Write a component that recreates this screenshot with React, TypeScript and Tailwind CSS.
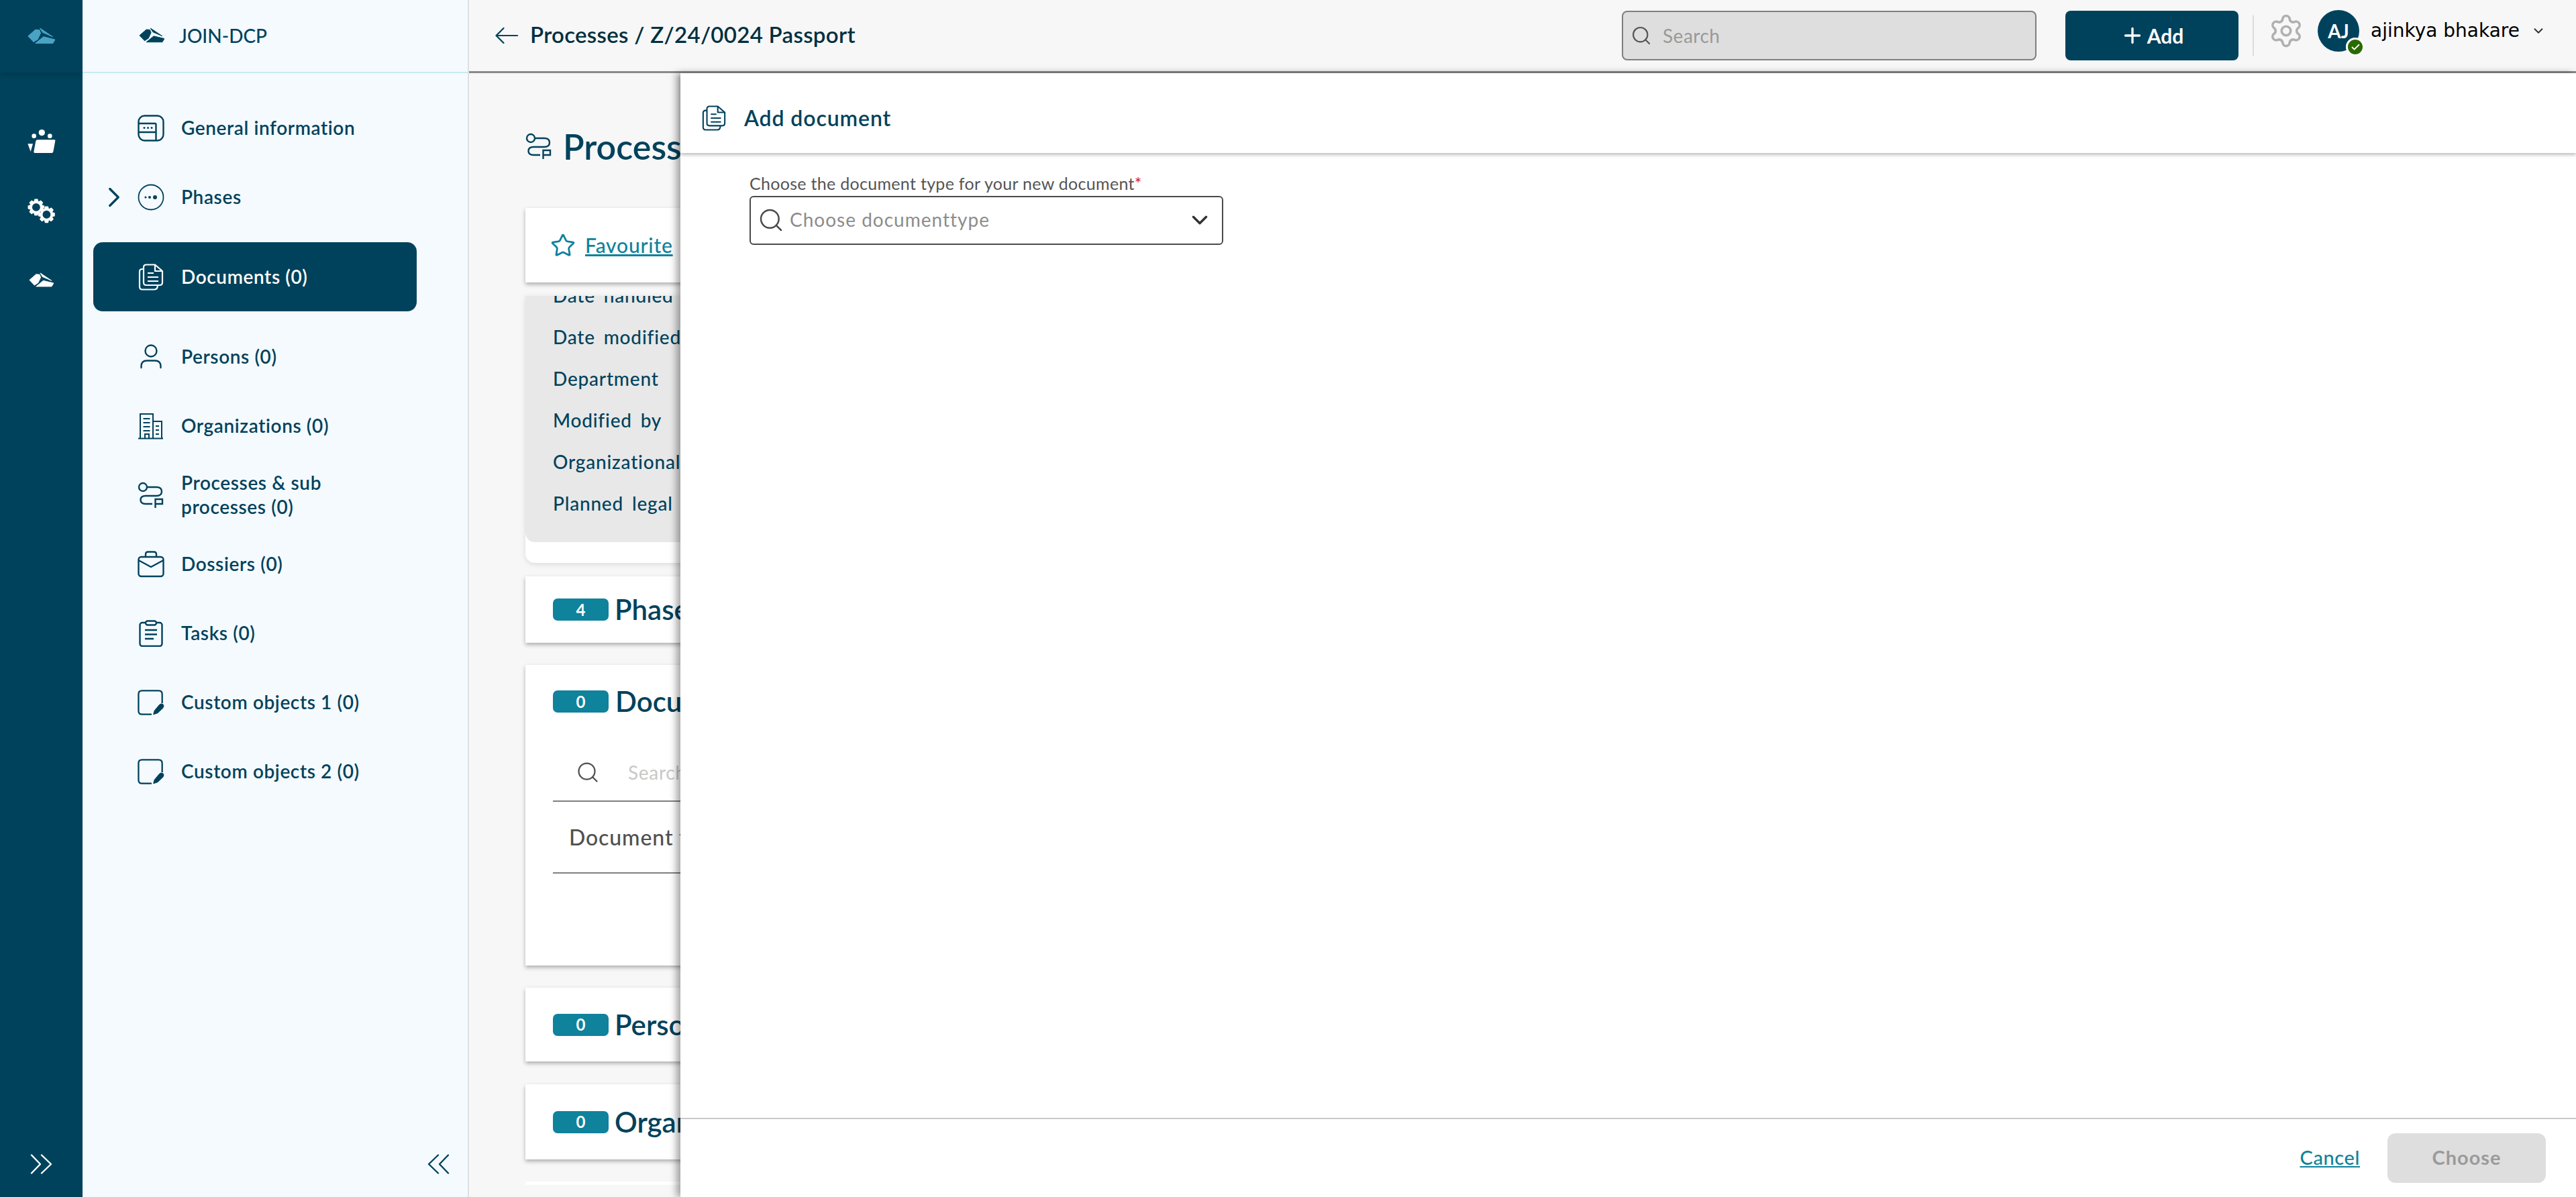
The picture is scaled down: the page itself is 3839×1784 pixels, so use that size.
import React from "react";
import { ChevronDown, ChevronRight, Plus, Search, Settings, Star, Check } from "lucide-react";

const NAVY = "text-[#00425c]";

// join logo, drawn in the 40x26 box it has in the rail
function JoinLogo({ className, fill }: { className?: string; fill: string }) {
  return (
    <svg viewBox="0 0 40 26" className={className} fill={fill} stroke={fill} strokeWidth="1" strokeLinejoin="round">
      <path d="M1 12.3 11.7 3 17.3 3.4 19 8 15 16.7 9 20.7Z" />
      <path d="M18.3 1 36.7 13.3 22 7Z" />
      <path d="M11.7 22.7 23.3 13.3 40 17.3 36.7 22.7Z" />
    </svg>
  );
}

function PeopleIcon() {
  return (
    <svg viewBox="25 30 135 120" className="w-[45px] h-[40px]" fill="white">
      <circle cx="60" cy="68" r="10" />
      <circle cx="95" cy="53" r="14" />
      <circle cx="131" cy="68" r="10" />
      <path d="M76 85H152Q156 85 155 90L146 138Q145 144 139 144H64Q58 144 59 138L68 91Q69 85 76 85Z" />
      <path d="M32 103H55L45 138Z" />
    </svg>
  );
}

function gearPath(cx: number, cy: number, outer: number, inner: number, teeth: number) {
  const pts: string[] = [];
  for (let i = 0; i < teeth; i++) {
    const a = (i / teeth) * Math.PI * 2;
    const w = Math.PI / teeth;
    [[inner, -w], [outer, -w * 0.5], [outer, w * 0.5], [inner, w]].forEach(([r, d]) => {
      pts.push(`${(cx + r * Math.cos(a + d)).toFixed(1)} ${(cy + r * Math.sin(a + d)).toFixed(1)}`);
    });
  }
  return "M" + pts.join("L") + "Z";
}

function GearsIcon() {
  return (
    <svg viewBox="28 338 130 122" className="w-[43px] h-[41px]">
      <path d={gearPath(70, 382, 38, 28, 8)} fill="white" />
      <circle cx="70" cy="382" r="18" fill="#00425c" />
      <circle cx="117" cy="415" r="32" fill="#00425c" />
      <path d={gearPath(117, 415, 38, 28, 8)} fill="white" />
      <circle cx="117" cy="415" r="18" fill="#00425c" />
    </svg>
  );
}

function DoubleChevron({ flip, className }: { flip?: boolean; className?: string }) {
  return (
    <svg viewBox="0 0 34 30" className={`w-[34px] h-[30px] ${flip ? "-scale-x-100" : ""} ${className ?? ""}`} fill="none" stroke="currentColor" strokeWidth="2.400" strokeLinecap="round" strokeLinejoin="round">
      <path d="M2 1.500 15 15 2 28.500M17 1.500 31 15 17 28.500" />
    </svg>
  );
}

function GeneralIcon() {
  return (
    <svg viewBox="0 0 40 40" className="w-[40px] h-[40px]" fill="none" stroke="currentColor" strokeWidth="2.400">
      <rect x="1.500" y="1.500" width="37" height="37" rx="9" />
      <path d="M1.500 13H26Q27.500 13 27.500 15V38M1.500 26H27.500" />
      <g fill="currentColor" stroke="none">
        <circle cx="10" cy="19.500" r="1.500" /><circle cx="15.500" cy="19.500" r="1.500" /><circle cx="21" cy="19.500" r="1.500" />
      </g>
    </svg>
  );
}

function PhasesIcon() {
  return (
    <svg viewBox="0 0 40 40" className="w-[40px] h-[40px]" fill="none" stroke="currentColor" strokeWidth="1.800">
      <circle cx="20" cy="20" r="18.500" />
      <g fill="currentColor" stroke="none">
        <circle cx="12" cy="20" r="1.600" /><circle cx="18" cy="20" r="2" /><circle cx="26" cy="20" r="3" />
      </g>
    </svg>
  );
}

function DocumentsIcon({ className = "w-[40px] h-[40px]" }: { className?: string }) {
  return (
    <svg viewBox="0 0 40 40" className={className} fill="none" stroke="currentColor" strokeWidth="2.200" strokeLinejoin="round">
      <path d="M13 1.500H26L37 11V28Q37 32 33 32H13Q9 32 9 28V5.500Q9 1.500 13 1.500Z" />
      <path d="M26 1.500V11H37" />
      <path d="M9 8H7Q3 8 3 12V34Q3 38.500 7 38.500H25Q30 38.500 30 32" />
      <path d="M15 14H24M15 20H31M15 26H31" />
    </svg>
  );
}

function PersonIcon() {
  return (
    <svg viewBox="0 0 40 40" className="w-[40px] h-[40px]" fill="none" stroke="currentColor" strokeWidth="2.400" strokeLinecap="round">
      <circle cx="20" cy="11" r="8.500" />
      <path d="M5.500 36V34Q5.500 25.500 14 25.500H26Q34.500 25.500 34.500 34V36" />
    </svg>
  );
}

function BuildingIcon() {
  return (
    <svg viewBox="0 0 40 40" className="w-[40px] h-[40px]" fill="none" stroke="currentColor" strokeWidth="2">
      <path d="M1 38.500H38M4 38V2H23V38M23 13H36V38" />
      <path d="M8.500 9H18.500M8.500 15H18.500M8.500 21H18.500M8.500 27H18.500M11 38V32H17V38M27 20H32M27 26H32M27 32H32" />
    </svg>
  );
}

function ProcessIcon({ className = "w-[40px] h-[40px]" }: { className?: string }) {
  return (
    <svg viewBox="0 0 40 40" className={className} fill="none" stroke="currentColor" strokeWidth="2.400">
      <circle cx="8" cy="8" r="6" />
      <path d="M14 8H28Q36 8 36 14.500T28 21H12Q4.500 21 4.500 27T12 33H22" />
      <path d="M26.500 39V26H37V33H26.500" />
    </svg>
  );
}

function DossierIcon() {
  return (
    <svg viewBox="0 0 40 40" className="w-[40px] h-[40px]" fill="none" stroke="currentColor" strokeWidth="2.400" strokeLinejoin="round">
      <rect x="1.500" y="9" width="37" height="29" rx="4" />
      <path d="M12 9V5Q12 1.500 15.500 1.500H24.500Q28 1.500 28 5V9M1.500 14 20 24 38.500 14" />
    </svg>
  );
}

function TasksIcon() {
  return (
    <svg viewBox="0 0 40 40" className="w-[40px] h-[40px]" fill="none" stroke="currentColor" strokeWidth="2.400">
      <rect x="3.500" y="4" width="33" height="35" rx="3.500" />
      <rect x="12" y="1.500" width="16" height="6" rx="3" fill="#f5faff" />
      <path d="M11 15H29M11 21.500H29M11 28H24" />
    </svg>
  );
}

function CustomIcon() {
  return (
    <svg viewBox="0 0 42 40" className="w-[42px] h-[40px]" fill="none" stroke="currentColor" strokeWidth="2.400" strokeLinejoin="round">
      <path d="M22 38.500H7Q1.500 38.500 1.500 33V7Q1.500 1.500 7 1.500H33Q38.500 1.500 38.500 7V21" />
      <path d="M25 38.500 26.500 33 34 24Q37 21 39.500 23T39.500 28.500L31 36.500Z" fill="currentColor" strokeWidth="1.200" />
    </svg>
  );
}

const navItems = [
  { label: "General information", icon: <GeneralIcon /> },
  { label: "Phases", icon: <PhasesIcon />, chevron: true },
  { label: "Documents (0)", icon: <DocumentsIcon />, active: true },
  { label: "Persons (0)", icon: <PersonIcon /> },
  { label: "Organizations (0)", icon: <BuildingIcon /> },
  { label: "Processes & sub processes (0)", icon: <ProcessIcon /> },
  { label: "Dossiers (0)", icon: <DossierIcon /> },
  { label: "Tasks (0)", icon: <TasksIcon /> },
  { label: "Custom objects 1 (0)", icon: <CustomIcon /> },
  { label: "Custom objects 2 (0)", icon: <CustomIcon /> },
];

const propertyRows = ["Date handled", "Date modified", "Department", "Modified by", "Organizational unit", "Planned legal term"];

function CountCard({ count, title, className }: { count: number; title: string; className: string }) {
  return (
    <div className={`flex items-center gap-[9px] pl-[41px] bg-white shadow-[0_3px_6px_rgba(0,0,0,0.3)] ${className}`}>
      <span className="w-[83px] h-[33px] rounded-[7px] bg-[#0f829c] flex items-center justify-center text-white text-[24px] font-bold">{count}</span>
      <span className="text-[42px] font-semibold text-[#00425c] whitespace-nowrap">{title}</span>
    </div>
  );
}

export default function App() {
  return (
    <div className="relative flex h-screen w-full overflow-hidden bg-[#f7f7f7] font-['Lato',sans-serif] text-[#00425c]">
      {/* rail */}
      <aside className="flex flex-col w-[123px] shrink-0 bg-[#00425c]">
        <div className="h-[108px] flex items-center justify-center shadow-[0_4px_8px_rgba(0,0,0,0.15)]">
          <JoinLogo className="w-[41px] h-[27px]" fill="#4aa3c4" />
        </div>
        <div className="flex flex-col mt-[50px]">
          <div className="h-[104px] flex items-center justify-center"><PeopleIcon /></div>
          <div className="h-[104px] flex items-center justify-center"><GearsIcon /></div>
          <div className="h-[104px] flex items-center justify-center"><JoinLogo className="w-[37px] h-[24px]" fill="white" /></div>
        </div>
        <div className="mt-auto mb-[34px] flex justify-center text-white">
          <DoubleChevron />
        </div>
      </aside>

      {/* object nav */}
      <aside className="flex flex-col w-[576px] shrink-0 bg-[#f5faff] border-r-2 border-[#dde1e4]">
        <div className="h-[109px] shrink-0 flex items-center pl-[84px] gap-[22px] border-b-2 border-[#c4ecf3]">
          <JoinLogo className="w-[38px] h-[25px]" fill="#00425c" />
          <span className="text-[28px] font-medium mb-[2px]">JOIN-DCP</span>
        </div>
        <nav className="flex flex-col w-[482px] ml-[16px] mt-[30px]">
          {navItems.map((item) => (
            <div
              key={item.label}
              className={`flex items-center h-[103px] rounded-[14px] text-[28px] leading-[36px] tracking-[0.6px] font-semibold ${item.active ? "bg-[#00425c] text-white my-[16px]" : NAVY}`}
            >
              <span className="w-[66px] shrink-0 flex justify-end pr-[10px]">
                {item.chevron && <ChevronRight size={50} strokeWidth={1.600} />}
              </span>
              <span className="w-[40px] shrink-0 flex justify-center">{item.icon}</span>
              <span className="ml-[25px] w-[300px] mb-[2px]">{item.label}</span>
            </div>
          ))}
        </nav>
        <div className="mt-auto mb-[34px] flex justify-end pr-[27px]">
          <DoubleChevron flip />
        </div>
      </aside>

      {/* main column */}
      <div className="flex flex-col flex-1 min-w-0">
        <header className="h-[109px] shrink-0 flex items-center pl-[39px] pr-[45px] border-b-[3px] border-[#8a8a8a] bg-[#f7f7f7]">
          <svg viewBox="0 0 34 24" className="w-[34px] h-[24px]" fill="none" stroke="currentColor" strokeWidth="2.200" strokeLinecap="round" strokeLinejoin="round">
            <path d="M33 12H2M12.500 1 1.500 12 12.500 23" />
          </svg>
          <span className="ml-[18px] mb-[2px] text-[33px] tracking-[0.3px] font-semibold text-[#00303f]">Processes / Z/24/0024 Passport</span>
          <div className="ml-auto flex items-center w-[618px] h-[74px] pl-[11px] gap-[16px] rounded-[8px] bg-[#dedede] border-2 border-[#7f7f7f] text-[#999999] text-[28px] tracking-[0.5px]">
            <Search size={32} strokeWidth={1.600} className="text-[#555555]" />
            Search
          </div>
          <div className="ml-[43px] flex items-center justify-center gap-[4px] w-[258px] h-[74px] rounded-[8px] bg-[#00425c] text-white text-[30px] font-bold">
            <Plus size={36} strokeWidth={2.200} />
            Add
          </div>
          <div className="ml-[21px] w-[2px] h-[60px] bg-[#dddddd]" />
          <div className="flex items-center mb-[14px]">
            <Settings size={54} strokeWidth={1.600} className="ml-[21px] text-[#b0b0b0]" />
            <div className="relative ml-[20px] w-[62px] h-[62px] rounded-full bg-[#00425c] flex items-center justify-center text-white text-[28px] font-bold">
              AJ
              <span className="absolute -right-[8px] -bottom-[7px] w-[28px] h-[28px] rounded-full bg-[#2a6a00] border-[3px] border-white flex items-center justify-center">
                <Check size={15} strokeWidth={3} />
              </span>
            </div>
            <span className="ml-[17px] text-[28px] font-['DejaVu_Sans',sans-serif] text-black whitespace-nowrap">ajinkya bhakare</span>
            <ChevronDown size={22} strokeWidth={2.200} className="ml-[17px] text-[#333333]" />
          </div>
        </header>

        <main className="h-[1657px] overflow-hidden pl-[84px] pt-[79px]">
          <div className="flex items-center gap-[16px] h-[60px] mb-[62px]">
            <ProcessIcon className="w-[40px] h-[44px]" />
            <span className="text-[52px] font-semibold">Process</span>
          </div>
          <div className="w-[1600px] h-[111px] flex items-center pl-[37px] gap-[14px] bg-white shadow-[0_3px_6px_rgba(0,0,0,0.3)] text-[#0f829c]">
            <Star size={38} strokeWidth={1.800} />
            <span className="text-[30px] tracking-[0.8px] underline font-medium">Favourite</span>
          </div>
          <div className="w-[1600px] h-[398px] mt-[20px] bg-white rounded-bl-[14px] shadow-[0_2px_8px_rgba(0,0,0,0.12)] overflow-hidden">
            <div className="h-[367px] bg-[#e8e8e8] rounded-bl-[14px] pl-[41px] overflow-hidden">
              <div className="-mt-[32px] flex flex-col text-[28px] tracking-[0.8px] [word-spacing:5px] font-medium">
                {propertyRows.map((row) => (
                  <div key={row} className="h-[62px] flex items-center">{row}</div>
                ))}
              </div>
            </div>
          </div>
          <CountCard count={4} title="Phases" className="w-[1600px] h-[99px] mt-[20px]" />
          <div className="w-[1600px] h-[448px] mt-[33px] pl-[41px] pt-[38px] bg-white shadow-[0_3px_6px_rgba(0,0,0,0.3)]">
            <div className="flex items-center gap-[10px]">
              <span className="w-[83px] h-[33px] rounded-[7px] bg-[#0f829c] flex items-center justify-center text-white text-[24px] font-bold">0</span>
              <span className="text-[42px] leading-[33px] font-semibold whitespace-nowrap">Documents</span>
            </div>
            <div className="h-[86px] mt-[47px] flex items-center pl-[34px] gap-[42px] border-b-2 border-[#7f7f7f] text-[#c8c8c8] text-[28px] tracking-[0.7px]">
              <Search size={36} strokeWidth={1.500} className="text-[#4f4f4f]" />
              Search
            </div>
            <div className="h-[107px] flex items-center pl-[24px] border-b-2 border-[#7f7f7f] text-[32px] tracking-[0.9px] font-medium text-[#505050]">
              Document type
            </div>
          </div>
          <CountCard count={0} title="Persons" className="w-[1600px] h-[110px] mt-[33px]" />
          <CountCard count={0} title="Organizations" className="w-[1600px] h-[112px] mt-[34px]" />
          <div className="w-[1600px] h-[100px] mt-[33px] bg-white" />
        </main>
      </div>

      {/* add document panel */}
      <section className="absolute top-[109px] left-[1014px] right-0 bottom-0 flex flex-col bg-white shadow-[-6px_0_10px_rgba(0,0,0,0.35)]">
        <div className="h-[119px] shrink-0 flex items-center pl-[31px] pt-[14px] gap-[26px] shadow-[0_3px_5px_rgba(0,0,0,0.25)]">
          <DocumentsIcon className="w-[38px] h-[42px]" />
          <span className="text-[32px] tracking-[0.9px] font-semibold">Add document</span>
        </div>
        <div className="flex-1 pl-[103px] pt-[29px]">
          <label className="block text-[25px] leading-[32px] tracking-[0.3px] text-[#555555]">
            Choose the document type for your new document<span className="text-[#e02020]">*</span>
          </label>
          <div className="flex items-center w-[706px] h-[73px] mt-[3px] pl-[10px] pr-[14px] pb-[4px] border-2 border-[#4a4a4a] rounded-[6px] text-[#8c8c8c] text-[28px] tracking-[1px]">
            <Search size={40} strokeWidth={1.500} className="text-[#4a4a4a] mt-[2px]" />
            <span className="ml-[8px]">Choose documenttype</span>
            <ChevronDown size={38} strokeWidth={2.200} className="ml-auto mt-[2px] text-[#333333]" />
          </div>
        </div>
        <div className="h-[118px] shrink-0 flex items-start justify-end pt-[21px] pr-[45px] border-t-2 border-[#c8c8c8]">
          <span className="mt-[14px] text-[29px] tracking-[0.6px] font-medium underline text-[#0f829c]">Cancel</span>
          <div className="ml-[41px] w-[236px] h-[74px] pb-[3px] rounded-[12px] bg-[#dedede] flex items-center justify-center text-[#9b9b9b] text-[29px] font-bold tracking-[1px]">
            Choose
          </div>
        </div>
      </section>
    </div>
  );
}
